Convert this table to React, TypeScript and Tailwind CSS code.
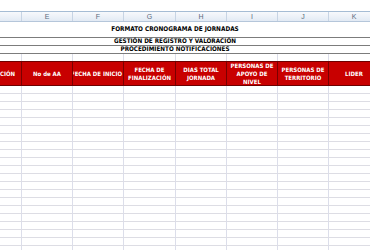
const widths = ["w-[22px]", "w-[51px]", "w-[51px]", "w-[52px]", "w-[51px]", "w-[51px]", "w-[51px]", "w-[51px]"];
const letters = ["D", "E", "F", "G", "H", "I", "J", "K"];

const headers: string[][] = [
  ["CIÓN"],
  ["No de AA"],
  ["FECHA DE INICIO"],
  ["FECHA DE", "FINALIZACIÓN"],
  ["DIAS TOTAL", "JORNADA"],
  ["PERSONAS DE", "APOYO DE", "NIVEL"],
  ["PERSONAS DE", "TERRITORIO"],
  ["LIDER"],
];

// cells whose text spills past the left edge
const alignEnd = ["justify-end pr-[6px]", "justify-center", "justify-end pr-[1px]", "justify-center", "justify-center", "justify-center", "justify-center", "justify-center"];

const tahoma = { fontFamily: '"DejaVu Sans Condensed", "DejaVu Sans", sans-serif' };

function GridRow() {
  return (
    <div className="flex shrink-0">
      {widths.map((w, i) => (
        <div key={i} className={`${w} h-[8px] shrink-0 border-r border-b border-r-[#dcdeea] border-b-[#dddde4]`} />
      ))}
    </div>
  );
}

export default function App() {
  return (
    <div
      className="w-[370px] h-[250px] overflow-hidden bg-white flex flex-col"
      style={{ fontFamily: '"Liberation Sans", Arial, sans-serif' }}
    >
      {/* formula bar area */}
      <div className="h-[12px] shrink-0 bg-white border-b border-[#a5bcd4]" />

      {/* column letters */}
      <div className="flex shrink-0 h-[10px] bg-gradient-to-b from-[#f7f9fc] to-[#e2eaf4] border-b border-[#b5c6da]">
        {widths.map((w, i) => (
          <div
            key={i}
            className={`${w} shrink-0 border-r border-[#c7d4e4] flex items-center justify-center text-[7px] leading-none text-[#5b6b7e]`}
          >
            {i === 0 ? "" : letters[i]}
          </div>
        ))}
      </div>

      {/* titles */}
      <div className="h-[15px] shrink-0 flex items-center justify-center pr-[20px]" style={tahoma}>
        <span className="text-[6.4px] font-bold text-black leading-none">FORMATO CRONOGRAMA DE JORNADAS</span>
      </div>
      <div className="h-[7px] shrink-0 border-t border-b border-[#7c7c7c] box-content flex items-center justify-center pr-[20px]" style={tahoma}>
        <span className="text-[6.3px] font-bold text-black leading-none">GESTIÓN DE REGISTRO Y VALORACIÓN</span>
      </div>
      <div className="h-[7px] shrink-0 border-b border-[#7c7c7c] box-content flex items-center justify-center pr-[20px]" style={tahoma}>
        <span className="text-[6.3px] font-bold text-black leading-none">PROCEDIMIENTO NOTIFICACIONES</span>
      </div>

      <div className="flex shrink-0">
        {widths.map((w, i) => (
          <div key={i} className={`${w} h-[7px] shrink-0 border-r border-[#dcdeea]`} />
        ))}
      </div>

      {/* red header */}
      <div className="flex shrink-0 border-t border-b border-[#6e0000]" style={tahoma}>
        {headers.map((lines, i) => (
          <div
            key={i}
            className={`${widths[i]} h-[23px] shrink-0 bg-[#c80000] border-r border-[#7a0000] overflow-hidden flex items-center ${alignEnd[i]}`}
          >
            <div className="flex flex-col items-center shrink-0">
              {lines.map((l) => (
                <span key={l} className="text-[6px] leading-[8px] font-bold text-white whitespace-nowrap">
                  {l}
                </span>
              ))}
            </div>
          </div>
        ))}
      </div>

      {Array.from({ length: 22 }).map((_, i) => (
        <GridRow key={i} />
      ))}
    </div>
  );
}
